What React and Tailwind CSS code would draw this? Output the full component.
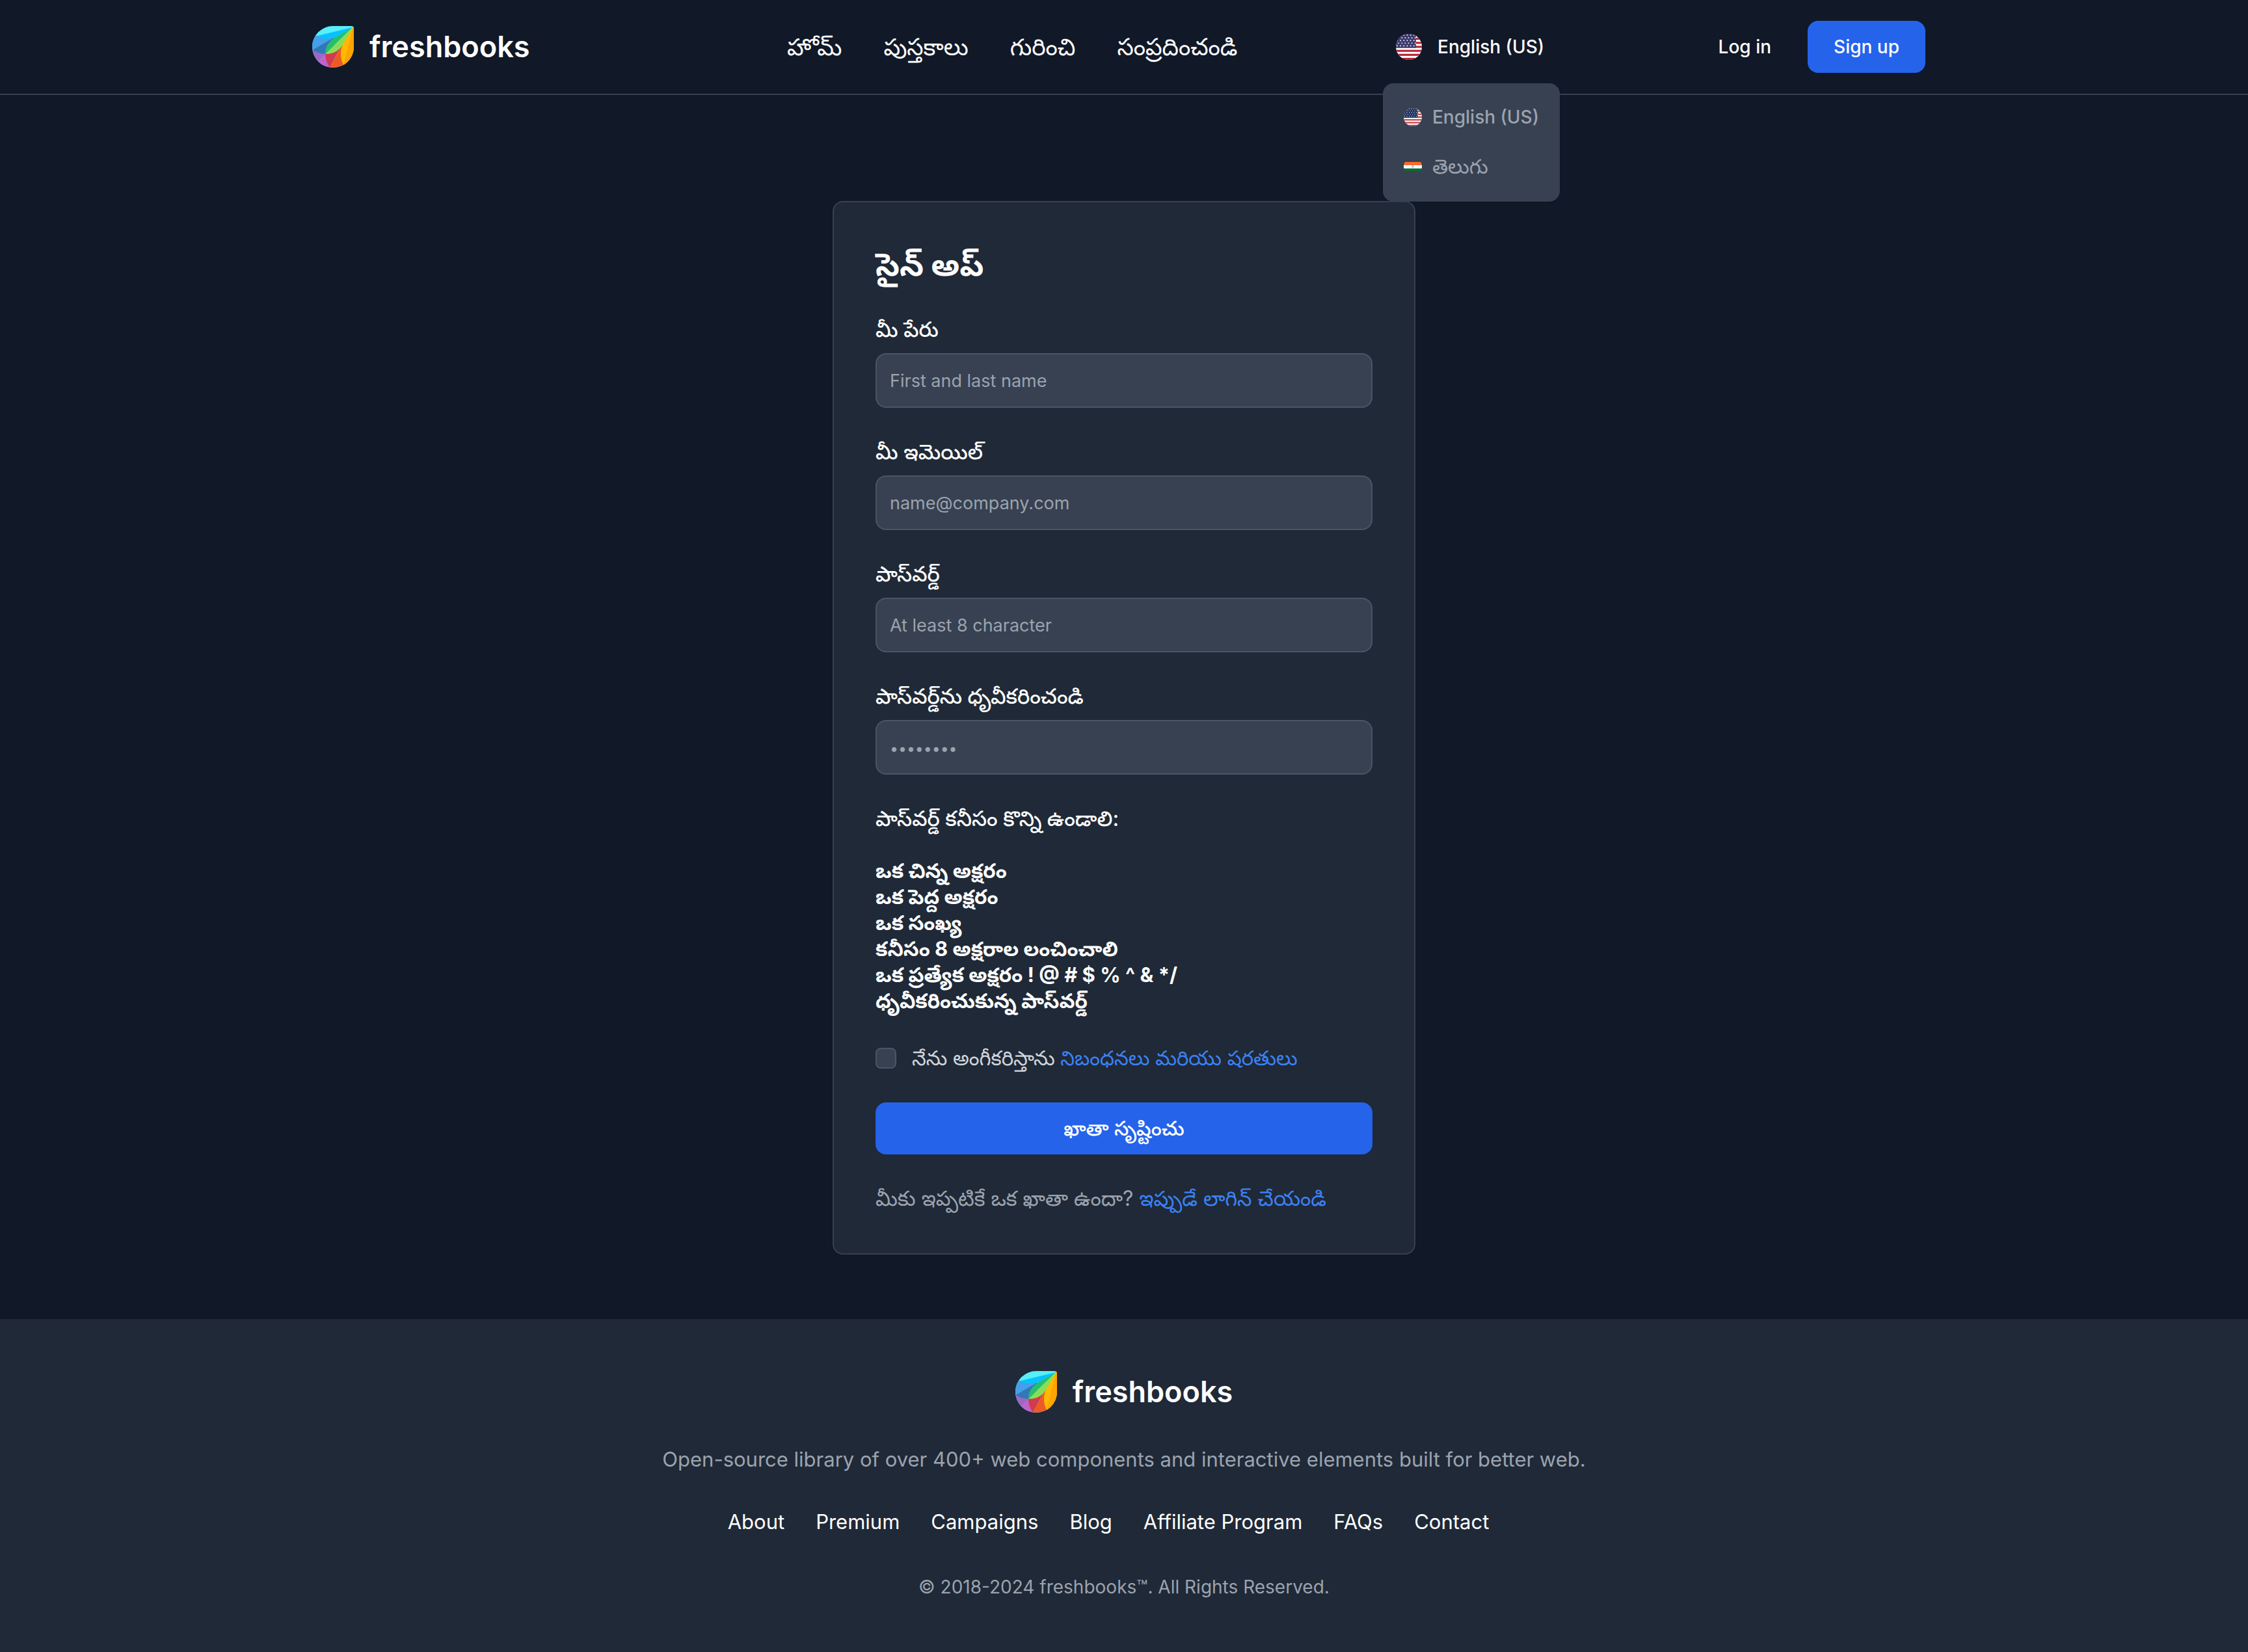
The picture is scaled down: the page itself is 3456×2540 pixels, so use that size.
import React from "react";

function LeafLogo() {
  return (
    <svg viewBox="0 0 64 64" className="h-16 w-16 shrink-0" aria-hidden="true">
      <defs>
        <clipPath id="leaf">
          <path d="M32 0H60Q64 0 64 4V32A32 32 0 1 1 32 0Z" />
        </clipPath>
      </defs>
      <g clipPath="url(#leaf)">
        <rect width="64" height="64" fill="#57eff8" />
        <path d="M4 16L62 2L32 20L20 30L0 24Z" fill="#08c1fd" />
        <path d="M0 14H5Q16 22 33 18L32 20L0 37Z" fill="#45a0e9" />
        <path d="M0 37L33 18L34 30L21 44Q8 43 0 37Z" fill="#3278b8" />
        <path d="M0 36Q8 43 21 43L12 52L0 64Z" fill="#9c68c4" />
        <path d="M11 53L21 43L30 64H0Z" fill="#bf63cd" />
        <path d="M20 43L46 28L27 64Q20 54 20 43Z" fill="#d23b4f" />
        <path d="M46 28L50 64H27Z" fill="#ee5a25" />
        <path d="M62 2L46 30Q41 46 48 60L64 64V2Z" fill="#ffb901" />
        <path d="M63 0L48 60L50 64H64V0Z" fill="#ffa401" />
        <path d="M62 2L20 43Q20 28 33 19Z" fill="#28bf6c" />
        <path d="M62 2L46 30Q38 43 20 43Z" fill="#8ade55" />
      </g>
    </svg>
  );
}

const STRIPES = [0, 2, 4, 6, 8, 10, 12];

function UsFlag({ id, canton, red, className }) {
  return (
    <svg viewBox="0 0 39 39" className={className} aria-hidden="true">
      <defs>
        <clipPath id={id}>
          <circle cx="19.5" cy="19.5" r="19.5" />
        </clipPath>
      </defs>
      <g clipPath={`url(#${id})`}>
        <rect width="39" height="39" fill="#fff" />
        {STRIPES.map((n) => (
          <rect key={n} y={n * 3} width="39" height="3" fill={red} />
        ))}
        <rect width="30" height="21" fill={canton} />
        {[2, 6, 10, 14, 18].map((y, row) =>
          [2, 7, 12, 17, 22, 27].map((x) => (
            <circle key={`${x}-${y}`} cx={x + (row % 2) * 2} cy={y} r="0.9" fill="#fff" />
          ))
        )}
      </g>
    </svg>
  );
}

function IndiaFlag({ className }) {
  return (
    <svg viewBox="0 0 28 28" className={className} aria-hidden="true">
      <defs>
        <clipPath id="in">
          <circle cx="14" cy="14" r="14" />
        </clipPath>
      </defs>
      <g clipPath="url(#in)">
        <rect y="7" width="28" height="5" fill="#fb6a2e" />
        <rect y="12" width="28" height="5" fill="#fff" />
        <rect y="17" width="28" height="4" fill="#0a6b35" />
        <circle cx="14" cy="14" r="1.5" fill="none" stroke="#8a8ac8" strokeWidth="0.8" />
      </g>
    </svg>
  );
}

function Brand() {
  return (
    <a href="#" className="flex items-center gap-6">
      <LeafLogo />
      <span className="text-[45px] leading-16 font-semibold text-white">freshbooks</span>
    </a>
  );
}

function Field({ id, label, type, placeholder, hint = "placeholder:text-[27px]" }) {
  return (
    <div className="flex flex-col gap-4">
      <label htmlFor={id} className="text-[32px] leading-10 font-medium text-white">
        {label}
      </label>
      <input
        id={id}
        type={type}
        placeholder={placeholder}
        className={`h-21 w-full rounded-2xl border-2 border-[#4b5563] bg-[#374151] px-5 text-[27px] text-white placeholder:text-[#9ca3af] ${hint}`}
      />
    </div>
  );
}

const NAV = ["హోమ్", "పుస్తకాలు", "గురించి", "సంప్రదించండి"];
const RULES = [
  "ఒక చిన్న అక్షరం",
  "ఒక పెద్ద అక్షరం",
  "ఒక సంఖ్య",
  "కనీసం 8 అక్షరాల లంచించాలి",
  "ఒక ప్రత్యేక అక్షరం ! @ # $ % ^ & */",
  "ధృవీకరించుకున్న పాస్‌వర్డ్",
];
const FOOTER = ["About", "Premium", "Campaigns", "Blog", "Affiliate Program", "FAQs", "Contact"];

export default function App() {
  return (
    <div className="min-h-screen bg-[#111827] font-[Inter,'Noto_Sans_Telugu','Noto_Sans',sans-serif]">
      <header className="border-b-2 border-[#374151]">
        <div className="mx-auto flex h-36 max-w-[2496px] items-center justify-between pr-4">
          <Brand />
          <nav className="ml-38 flex gap-16 text-[36px] leading-12 text-white">
            {NAV.map((n) => (
              <a key={n} href="#">{n}</a>
            ))}
          </nav>
          <div className="relative">
            <button type="button" className="flex items-center gap-6 text-[28px] leading-10 font-medium text-white">
              <UsFlag id="us-lg" canton="#3c3b6e" red="#b22234" className="h-10 w-10" />
              English (US)
            </button>
            <ul className="absolute top-19 -left-5 flex w-68 flex-col gap-9 rounded-2xl bg-[#374151] px-8 pt-8 pb-[34px] text-[28px] leading-10 font-medium text-[#9ca3af] shadow">
              <li>
                <a href="#" className="flex items-center gap-4 whitespace-nowrap">
                  <UsFlag id="us-sm" canton="#192f5d" red="#bd3d44" className="h-7 w-7" />
                  English (US)
                </a>
              </li>
              <li>
                <a href="#" className="flex items-center gap-4 text-[31px] leading-10 font-normal">
                  <IndiaFlag className="h-7 w-7" />
                  తెలుగు
                </a>
              </li>
            </ul>
          </div>
          <div className="ml-6 flex items-center gap-14">
            <a href="#" className="text-[28px] font-medium text-white">Log in</a>
            <button type="button" className="h-20 rounded-2xl bg-[#2563eb] px-10 text-[28px] font-medium text-white">
              Sign up
            </button>
          </div>
        </div>
      </header>

      <main className="px-8 pt-[163px] pb-[99px]">
        <form className="mx-auto flex max-w-4xl flex-col gap-12 rounded-2xl border-2 border-[#374151] bg-[#1f2937] p-16">
          <h1 className="text-5xl leading-16 font-bold text-white">సైన్ అప్</h1>
          <Field id="name" label="మీ పేరు" type="text" placeholder="First and last name" />
          <Field id="email" label="మీ ఇమెయిల్" type="email" placeholder="name@company.com" />
          <Field id="password" label="పాస్‌వర్డ్" type="password" placeholder="At least 8 character" />
          <Field
            id="confirm"
            label="పాస్‌వర్డ్‌ను ధృవీకరించండి"
            type="password"
            placeholder="••••••••"
            hint="placeholder:text-[23px]"
          />
          <div className="flex flex-col gap-10 text-white">
            <p className="text-[32px] leading-10 font-medium">పాస్‌వర్డ్ కనీసం కొన్ని ఉండాలి:</p>
            <ul className="text-[31px] leading-10 font-bold">
              {RULES.map((r) => (
                <li key={r}>{r}</li>
              ))}
            </ul>
          </div>
          <div className="flex items-center gap-6 text-[31px] leading-10 text-[#d1d5db]">
            <input
              id="terms"
              type="checkbox"
              className="h-8 w-8 appearance-none rounded-lg border-2 border-[#4b5563] bg-[#374151]"
            />
            <label htmlFor="terms">
              నేను అంగీకరిస్తాను <a href="#" className="text-[#3b82f6]">నిబంధనలు మరియు షరతులు</a>
            </label>
          </div>
          <button type="submit" className="h-20 rounded-2xl bg-[#2563eb] text-[31px] font-medium text-white">
            ఖాతా సృష్టించు
          </button>
          <p className="text-[32px] leading-10 text-[#9ca3af]">
            మీకు ఇప్పటికే ఒక ఖాతా ఉందా? <a href="#" className="text-[#3b82f6]">ఇప్పుడే లాగిన్ చేయండి</a>
          </p>
        </form>
      </main>

      <footer className="flex flex-col items-center bg-[#1f2937] px-8 py-20">
        <Brand />
        <p className="my-12 text-[31px] leading-12 text-[#9ca3af]">
          Open-source library of over 400+ web components and interactive elements built for better web.
        </p>
        <ul className="mb-14 flex gap-12 pr-12 text-[31px] leading-12 text-white">
          {FOOTER.map((f) => (
            <li key={f}>
              <a href="#">{f}</a>
            </li>
          ))}
        </ul>
        <p className="text-[28px] leading-10 text-[#9ca3af]">© 2018-2024 freshbooks™. All Rights Reserved.</p>
      </footer>
    </div>
  );
}
